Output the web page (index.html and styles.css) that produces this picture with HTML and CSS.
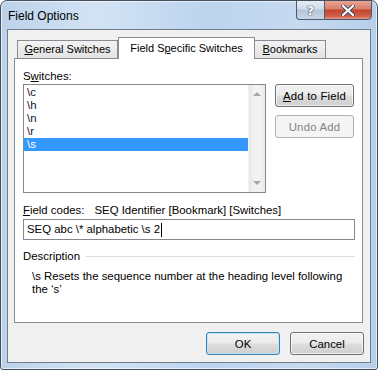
FILE: index.html
```html
<!DOCTYPE html>
<html lang="en">
<head>
    <meta charset="UTF-8">
    <title>Field Options</title>
    <link rel="stylesheet" href="styles.css">
</head>
<body>
    <div class="window">
        <div class="titlebar">
            <span class="title">Field Options</span>
            <div class="caption-buttons">
                <div class="cap-btn help">?</div>
                <div class="cap-btn close">
                    <svg width="14" height="11" viewBox="0 0 14 11">
                        <path d="M2 1 L12 10 M12 1 L2 10" stroke="#3b4a5e" stroke-width="4" stroke-linecap="round"/>
                        <path d="M2 1 L12 10 M12 1 L2 10" stroke="#ffffff" stroke-width="2.2" stroke-linecap="round"/>
                    </svg>
                </div>
            </div>
        </div>

        <div class="client">
            <div class="tabs">
                <div class="tab general"><u>G</u>eneral Switches</div>
                <div class="tab active">Field S<u>p</u>ecific Switches</div>
                <div class="tab bookmarks"><u>B</u>ookmarks</div>
            </div>

            <div class="panel">
                <div class="label">S<u>w</u>itches:</div>
                <div class="switch-row">
                    <div class="listbox">
                        <div class="items">
                            <div class="item">\c</div>
                            <div class="item">\h</div>
                            <div class="item">\n</div>
                            <div class="item">\r</div>
                            <div class="item selected">\s</div>
                        </div>
                        <div class="scrollbar">
                            <span class="arrow up"></span>
                            <span class="arrow down"></span>
                        </div>
                    </div>
                    <div class="side-buttons">
                        <div class="button wide"><u>A</u>dd to Field</div>
                        <div class="button disabled wide">Undo Add</div>
                    </div>
                </div>

                <div class="label codes"><u>F</u>ield codes:<span class="syntax">SEQ Identifier [Bookmark] [Switches]</span></div>
                <div class="textbox">SEQ abc \* alphabetic \s 2<span class="caret"></span></div>

                <div class="group-head">
                    <span>Description</span>
                    <span class="rule"></span>
                </div>
                <div class="description">\s Resets the sequence number at the heading level following<br>the ‘s’</div>
            </div>

            <div class="footer">
                <div class="button default">OK</div>
                <div class="button">Cancel</div>
            </div>
        </div>
    </div>
</body>
</html>
```

FILE: styles.css
```css
* {
    margin: 0;
    padding: 0;
    box-sizing: border-box;
}

body {
    background: #ffffff;
    font-family: "Liberation Sans", Arial, sans-serif;
    font-size: 11.4px;
    color: #000000;
}

u {
    text-decoration: underline;
    text-underline-offset: 1px;
}

.window {
    width: 378px;
    height: 370px;
    border: 1px solid #44505f;
    border-radius: 7px 7px 3px 3px;
    background: linear-gradient(to right, #bcd2ea 0%, #d3e3f4 25%, #bcd4ee 55%, #c6daf0 80%, #b7cfe9 100%);
    box-shadow: inset 0 0 0 1px rgba(255, 255, 255, 0.6);
    display: flex;
    flex-direction: column;
    overflow: hidden;
}

.titlebar {
    height: 28px;
    display: flex;
    align-items: flex-start;
}

.title {
    font-size: 12px;
    line-height: 14px;
    padding: 8px 0 0 7px;
    color: #000000;
}

.caption-buttons {
    margin-left: auto;
    margin-right: 5px;
    margin-top: -1px;
    display: flex;
}

.cap-btn {
    height: 20px;
    border: 1px solid #4a5a70;
    display: flex;
    align-items: center;
    justify-content: center;
}

.help {
    width: 28px;
    border-right: none;
    border-radius: 0 0 0 4px;
    background: linear-gradient(to bottom, #e4ecf5 0%, #cfdbe8 45%, #b4c5d8 50%, #c8d6e6 100%);
    color: #ffffff;
    font-family: "DejaVu Sans", sans-serif;
    font-weight: bold;
    font-size: 13px;
    text-shadow: 0 0 1px #3b4a5e, 0 0 1px #3b4a5e, 0 0 1px #3b4a5e;
}

.close {
    width: 48px;
    border-radius: 0 0 4px 0;
    background: linear-gradient(to bottom, #e8a493 0%, #d97e69 45%, #c34329 50%, #d0604a 85%, #e39a86 100%);
}

.client {
    flex: 1;
    margin: 0 6px 6px;
    border: 1px solid #6f7c8c;
    background: #f0f0f0;
    display: flex;
    flex-direction: column;
}

.tabs {
    display: flex;
    align-items: flex-end;
    margin: 7px 0 0 9px;
    height: 21px;
    position: relative;
    z-index: 1;
}

.tab {
    height: 18px;
    border: 1px solid #898c95;
    border-bottom: none;
    background: linear-gradient(to bottom, #f2f2f2, #e3e3e3);
    font-size: 11px;
    line-height: 17px;
    text-align: center;
    white-space: nowrap;
}

.tab.general {
    width: 101px;
}

.tab.bookmarks {
    width: 71px;
    border-left: none;
}

.tab.active {
    width: 137px;
    height: 22px;
    margin-bottom: -1px;
    background: #ffffff;
    line-height: 20px;
}

.panel {
    width: 349px;
    height: 265px;
    margin-left: 6px;
    border: 1px solid #898c95;
    background: #ffffff;
    padding: 11px 7px 0 8px;
}

.label {
    line-height: 13px;
    white-space: nowrap;
}

.switch-row {
    display: flex;
    margin-top: 1px;
}

.listbox {
    width: 243px;
    height: 109px;
    border: 1px solid #828790;
    display: flex;
}

.items {
    flex: 1;
    padding-top: 1px;
}

.item {
    height: 13px;
    line-height: 13px;
    padding-left: 3px;
    color: #10102a;
}

.item.selected {
    background: #3399ff;
    color: #ffffff;
}

.scrollbar {
    width: 17px;
    background: linear-gradient(to right, #e6e6e6, #f2f2f2 30%, #f2f2f2 70%, #e9e9e9);
    border-left: 1px solid #f4f4f4;
    display: flex;
    flex-direction: column;
    justify-content: space-between;
    align-items: center;
    padding: 7px 0 7px;
}

.arrow {
    width: 0;
    height: 0;
    border-left: 4px solid transparent;
    border-right: 4px solid transparent;
}

.arrow.up {
    border-bottom: 4px solid #a6a6a6;
}

.arrow.down {
    border-top: 4px solid #a6a6a6;
}

.side-buttons {
    margin-left: 9px;
    display: flex;
    flex-direction: column;
    gap: 8px;
}

.button {
    width: 79px;
    height: 23px;
    border: 1px solid #707070;
    border-radius: 3px;
    background: linear-gradient(to bottom, #f2f2f2 0%, #ebebeb 48%, #dddddd 52%, #cfcfcf 100%);
    box-shadow: inset 0 0 0 1px rgba(255, 255, 255, 0.7);
    display: flex;
    align-items: center;
    justify-content: center;
    white-space: nowrap;
}

.button.wide {
    letter-spacing: 0.2px;
}

.button.disabled {
    border-color: #adb2b5;
    background: #f4f4f4;
    box-shadow: none;
    color: #838383;
}

.codes {
    margin-top: 11px;
}

.syntax {
    margin-left: 10px;
}

.textbox {
    margin-top: 2px;
    height: 21px;
    border: 1px solid #828790;
    padding-left: 3px;
    line-height: 19px;
    display: flex;
    align-items: center;
}

.caret {
    display: inline-block;
    width: 1px;
    height: 14px;
    background: #000000;
    margin-left: 1px;
}

.group-head {
    margin-top: 10px;
    display: flex;
    align-items: center;
    line-height: 13px;
}

.rule {
    flex: 1;
    height: 1px;
    background: #d5dfe5;
    margin-left: 6px;
}

.description {
    margin-top: 7px;
    padding-left: 9px;
    line-height: 13px;
}

.footer {
    display: flex;
    justify-content: flex-end;
    gap: 10px;
    margin: 9px 6px 0 0;
}

.footer .button {
    width: 74px;
}

.button.default {
    border-color: #3c7fb1;
    box-shadow: inset 0 0 0 1px #bfe3f8;
}
```
